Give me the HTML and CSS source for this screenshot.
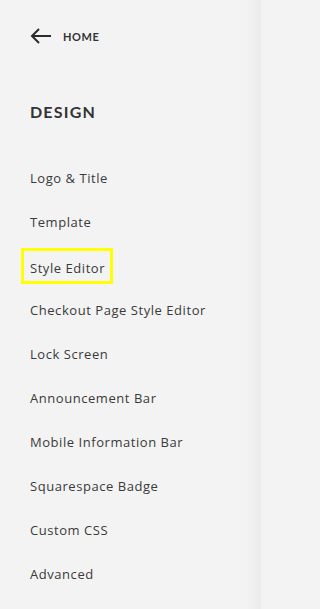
FILE: index.html
```html
<!DOCTYPE html>
<html>
<head>
<meta charset="utf-8">
<link rel="stylesheet" href="styles.css">
</head>
<body>
<nav class="panel">
  <div class="back">
    <svg class="arrow" width="22" height="16" viewBox="0 0 22 16">
      <path d="M21 8H2M9 1L2 8l7 7" fill="none" stroke="#2b2b2b" stroke-width="2"/>
    </svg>
    <span class="home">HOME</span>
  </div>
  <h1 class="title">DESIGN</h1>
  <ul class="menu">
    <li class="item">Logo &amp; Title</li>
    <li class="item">Template</li>
    <li class="item"><span class="highlight">Style Editor</span></li>
    <li class="item">Checkout Page Style Editor</li>
    <li class="item">Lock Screen</li>
    <li class="item">Announcement Bar</li>
    <li class="item">Mobile Information Bar</li>
    <li class="item">Squarespace Badge</li>
    <li class="item">Custom CSS</li>
    <li class="item">Advanced</li>
  </ul>
</nav>
</body>
</html>
```
FILE: styles.css
```css
html, body {
  margin: 0;
  padding: 0;
  height: 100%;
}
body {
  background: #f3f3f3;
  font-family: "Open Sans", "Lato", sans-serif;
  color: #3a3a3a;
}
.panel {
  width: 261px;
  height: 609px;
  box-sizing: border-box;
  padding: 28px 0 0 30px;
  background: linear-gradient(to right, #f3f3f3 0, #f3f3f3 246px, #ebebeb 261px);
}
.back {
  display: flex;
  align-items: center;
  gap: 11px;
  height: 16px;
}
.arrow {
  display: block;
}
.home {
  font-family: "Lato", sans-serif;
  font-size: 11px;
  font-weight: 700;
  letter-spacing: 0.6px;
  color: #333;
}
.title {
  margin: 58px 0 0 0;
  font-family: "Lato", sans-serif;
  font-size: 16px;
  line-height: 20px;
  font-weight: 700;
  letter-spacing: 1.2px;
  color: #333;
}
.menu {
  list-style: none;
  margin: 34px 0 0 0;
  padding: 0;
}
.item {
  height: 44px;
  line-height: 44px;
  font-size: 13px;
  letter-spacing: 0.55px;
}
.highlight {
  display: inline-block;
  position: relative;
  line-height: 16px;
  vertical-align: middle;
}
.highlight::after {
  content: "";
  position: absolute;
  left: -9px;
  right: -8px;
  top: -12px;
  bottom: -8px;
  border: 3px solid #ffff00;
}
```
